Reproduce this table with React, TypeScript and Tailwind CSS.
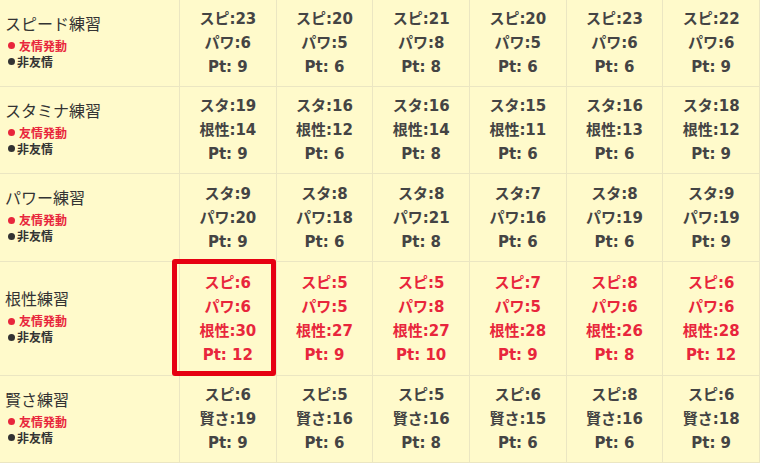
import React from "react"

type Row = {
  name: string
  cells: string[][]
  friendship?: boolean
  tall?: boolean
}

const rows: Row[] = [
  {
    name: "スピード練習",
    cells: [
      ["スピ:23", "パワ:6", "Pt: 9"],
      ["スピ:20", "パワ:5", "Pt: 6"],
      ["スピ:21", "パワ:8", "Pt: 8"],
      ["スピ:20", "パワ:5", "Pt: 6"],
      ["スピ:23", "パワ:6", "Pt: 6"],
      ["スピ:22", "パワ:6", "Pt: 9"],
    ],
  },
  {
    name: "スタミナ練習",
    cells: [
      ["スタ:19", "根性:14", "Pt: 9"],
      ["スタ:16", "根性:12", "Pt: 6"],
      ["スタ:16", "根性:14", "Pt: 8"],
      ["スタ:15", "根性:11", "Pt: 6"],
      ["スタ:16", "根性:13", "Pt: 6"],
      ["スタ:18", "根性:12", "Pt: 9"],
    ],
  },
  {
    name: "パワー練習",
    cells: [
      ["スタ:9", "パワ:20", "Pt: 9"],
      ["スタ:8", "パワ:18", "Pt: 6"],
      ["スタ:8", "パワ:21", "Pt: 8"],
      ["スタ:7", "パワ:16", "Pt: 6"],
      ["スタ:8", "パワ:19", "Pt: 6"],
      ["スタ:9", "パワ:19", "Pt: 9"],
    ],
  },
  {
    name: "根性練習",
    friendship: true,
    tall: true,
    cells: [
      ["スピ:6", "パワ:6", "根性:30", "Pt: 12"],
      ["スピ:5", "パワ:5", "根性:27", "Pt: 9"],
      ["スピ:5", "パワ:8", "根性:27", "Pt: 10"],
      ["スピ:7", "パワ:5", "根性:28", "Pt: 9"],
      ["スピ:8", "パワ:6", "根性:26", "Pt: 8"],
      ["スピ:6", "パワ:6", "根性:28", "Pt: 12"],
    ],
  },
  {
    name: "賢さ練習",
    cells: [
      ["スピ:6", "賢さ:19", "Pt: 9"],
      ["スピ:5", "賢さ:16", "Pt: 6"],
      ["スピ:5", "賢さ:16", "Pt: 8"],
      ["スピ:6", "賢さ:15", "Pt: 6"],
      ["スピ:8", "賢さ:16", "Pt: 6"],
      ["スピ:6", "賢さ:18", "Pt: 9"],
    ],
  },
]

export default function App() {
  return (
    <div
      className="w-[760px] h-[463px] overflow-hidden bg-[#fffacb]"
      style={{ fontFamily: '"Noto Sans CJK JP", "Noto Sans", sans-serif' }}
    >
      <div className="grid grid-cols-[180px_repeat(6,1fr)]">
        {rows.map((row, ri) => (
          <React.Fragment key={row.name}>
            <div
              className={`flex flex-col justify-center pl-[5px] pb-[6px] border-r border-b border-[#ebe6c2] ${
                row.tall ? "h-[114px]" : ri === 2 ? "h-[88px]" : "h-[87px]"
              }`}
            >
              <div className="text-[16px] leading-[24px] text-[#333] mb-[3px]">{row.name}</div>
              <div className="flex items-center pl-[3px] text-[12px] leading-[16px] text-[#e8263c] font-bold">
                <span className="w-[7px] h-[7px] rounded-full bg-[#e8263c] mr-[4px]" />
                友情発動
              </div>
              <div className="flex items-center pl-[3px] text-[12px] leading-[16px] text-[#333] font-bold">
                <span className="w-[7px] h-[7px] rounded-full bg-[#333] mr-[2px]" />
                非友情
              </div>
            </div>
            {row.cells.map((cell, ci) => (
              <div
                key={ci}
                className={`relative flex flex-col items-center justify-center border-r border-b border-[#ebe6c2] text-[15px] leading-[24px] font-bold ${
                  row.friendship ? "text-[#e8263c]" : "text-[#444]"
                } ${row.tall ? "h-[114px]" : ri === 2 ? "h-[88px]" : "h-[87px]"}`}
                style={{ fontFamily: '"DejaVu Sans", "Noto Sans CJK JP", sans-serif' }}
              >
                {cell.map((line, li) => (
                  <div key={li}>{line}</div>
                ))}
                {row.friendship && ci === 0 && (
                  <div className="absolute -left-[8px] right-[0px] -top-[3px] -bottom-[1px] border-[5px] border-[#e60012] rounded-[3px]" />
                )}
              </div>
            ))}
          </React.Fragment>
        ))}
      </div>
    </div>
  )
}
